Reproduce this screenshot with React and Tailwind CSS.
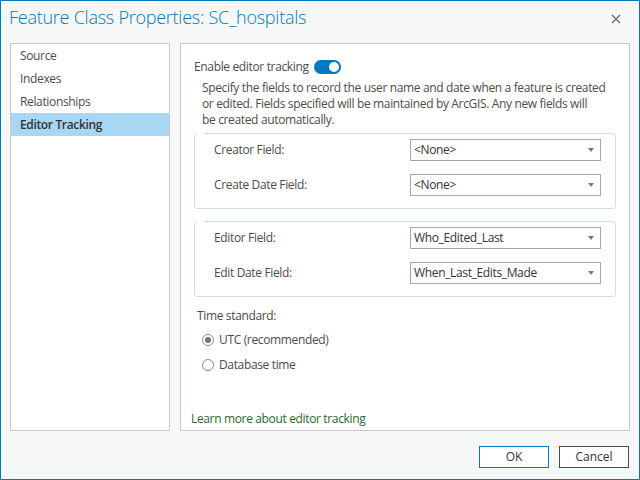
import React from 'react';

const font = { fontFamily: '"Open Sans", "Noto Sans", sans-serif' };

function Dropdown({ value }) {
  return (
    <div className="w-[191px] h-[22px] border border-[#a6a6a6] bg-white flex items-center justify-between pl-[3px] pr-[6px] text-[12px] tracking-[-0.35px] text-[#333]">
      <span>{value}</span>
      <svg width="6" height="4" viewBox="0 0 6 4"><path d="M0 0h6L3 4z" fill="#777" /></svg>
    </div>
  );
}

function Group({ rows }) {
  return (
    <fieldset className="w-[422px] border border-[#d4dbe2] rounded-[3px] px-0 m-0">
      <legend className="w-[7px] h-0 ml-[2px]"></legend>
      <div className="flex flex-col gap-[13px] pt-[5px] pb-[12px]">
        {rows.map((r) => (
          <div key={r[0]} className="flex items-center justify-between pl-[19px] pr-[14px]">
            <span className="text-[12px] tracking-[-0.35px] text-[#4c4c4c]">{r[0]}</span>
            <Dropdown value={r[1]} />
          </div>
        ))}
      </div>
    </fieldset>
  );
}

function Radio({ checked, label }) {
  return (
    <div className="flex items-center gap-[5px] h-[16px]">
      <span className="w-[12px] h-[12px] rounded-full border border-[#8a8a8a] bg-white flex items-center justify-center">
        {checked && <span className="w-[6px] h-[6px] rounded-full bg-[#6e6e6e]"></span>}
      </span>
      <span className="text-[12px] tracking-[-0.35px] text-[#4c4c4c]">{label}</span>
    </div>
  );
}

export default function App() {
  const items = ['Source', 'Indexes', 'Relationships', 'Editor Tracking'];
  return (
    <div style={font} className="w-[640px] h-[480px] bg-[#f6f7f7] border border-[#0079c1] flex flex-col">
      {/* Title bar */}
      <div className="h-[42px] flex items-start justify-between pl-[8px] pr-[18px] pt-[3px]">
        <h1 className="text-[18px] font-light text-[#0079c1] tracking-[-0.25px]">Feature Class Properties: SC_hospitals</h1>
        <svg width="10" height="10" viewBox="0 0 10 10" className="mt-[10px]">
          <path d="M1 1l8 8M9 1l-8 8" stroke="#666" strokeWidth="1.2" />
        </svg>
      </div>

      <div className="flex gap-[10px] pl-[9px] h-[388px]">
        {/* Sidebar */}
        <div className="w-[160px] bg-white border border-[#c8c8c8]">
          {items.map((it) => (
            <div
              key={it}
              className={`h-[23px] flex items-center pl-[9px] text-[12px] tracking-[-0.35px] ${it === 'Editor Tracking' ? 'bg-[#a9d6f3] font-semibold text-[#333]' : 'text-[#4c4c4c]'}`}
            >
              {it}
            </div>
          ))}
        </div>

        {/* Main panel */}
        <div className="w-[450px] bg-white border border-[#c8c8c8] flex flex-col pl-[13px] pt-[15px] pb-[2px] text-[12px] tracking-[-0.35px]">
          <div className="flex items-center gap-[5px] h-[16px]">
            <span className="text-[#4c4c4c]">Enable editor tracking</span>
            <span className="w-[27px] h-[14px] rounded-full bg-[#0079c1] flex items-center justify-end pr-[2px]">
              <span className="w-[10px] h-[10px] rounded-full bg-white"></span>
            </span>
          </div>
          <p className="ml-[8px] mt-[5px] w-[420px] leading-[16px] text-[#4c4c4c]">
            Specify the fields to record the user name and date when a feature is created<br />
            or edited. Fields specified will be maintained by ArcGIS. Any new fields will<br />
            be created automatically.
          </p>
          <div className="mt-[5px]">
            <Group rows={[['Creator Field:', '<None>'], ['Create Date Field:', '<None>']]} />
          </div>
          <div className="mt-[12px]">
            <Group rows={[['Editor Field:', 'Who_Edited_Last'], ['Edit Date Field:', 'When_Last_Edits_Made']]} />
          </div>
          <div className="ml-[3px] mt-[11px] text-[#4c4c4c] h-[16px] flex items-center">Time standard:</div>
          <div className="ml-[8px] mt-[8px] flex flex-col gap-[9px]">
            <Radio checked label="UTC (recommended)" />
            <Radio label="Database time" />
          </div>
          <div className="mt-auto -ml-[3px] text-[#2b6630] h-[16px] flex items-center mb-[1px]">Learn more about editor tracking</div>
        </div>
      </div>

      {/* Footer */}
      <div className="flex justify-end gap-[10px] pr-[10px] pt-[15px]">
        <button className="w-[70px] h-[22px] border border-[#0079c1] bg-white text-[12px] text-[#333]">OK</button>
        <button className="w-[70px] h-[22px] border border-[#4a4a4a] bg-white text-[12px] text-[#333]">Cancel</button>
      </div>
    </div>
  );
}
